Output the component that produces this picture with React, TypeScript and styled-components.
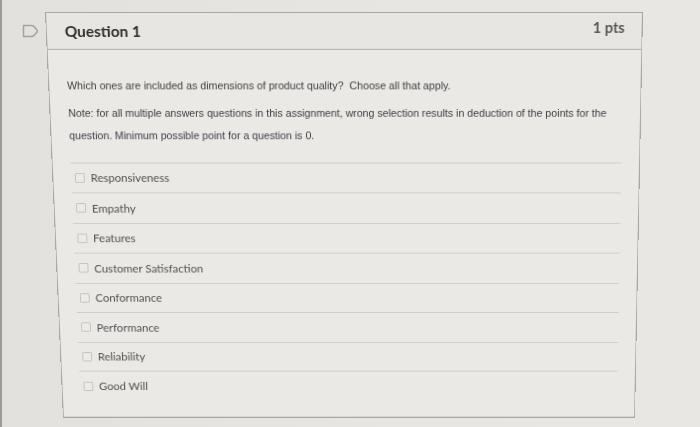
import React from "react";
import styled, { createGlobalStyle } from "styled-components";

const Global = createGlobalStyle`
  html, body {
    margin: 0;
    padding: 0;
    overflow: hidden;
    background: #e6e4e0;
  }
  * { box-sizing: border-box; }
`;

const Page = styled.div`
  width: 700px;
  height: 427px;
  display: flex;
  align-items: flex-start;
  padding: 12px 0 0 20px;
  border-left: 2px solid #9c9a96;
  background: linear-gradient(90deg, #e3e1dd 0%, #e8e6e2 60%, #e9e7e3 100%);
`;

const Gutter = styled.div`
  width: 23px;
  flex: none;
  padding-top: 12px;
`;

const Card = styled.section`
  width: 598px;
  height: 424px;
  flex: none;
  border: 1px solid #a9a8a4;
  background: #ebe9e5;
  display: flex;
  flex-direction: column;
  transform-origin: 0 0;
  transform: matrix3d(1, 0, 0, 0, 0.0443, 1, 0, 0.000107, 0, 0, 1, 0, 0, 0, 0, 1);
`;

const Header = styled.header`
  height: 37px;
  flex: none;
  display: flex;
  align-items: center;
  justify-content: space-between;
  padding: 0 17px 0 18px;
  background: #e8e6e2;
  border-bottom: 1px solid #aeada9;
`;

const Title = styled.h2`
  margin: 0;
  font-family: Lato, "Open Sans", sans-serif;
  font-weight: 700;
  font-size: 15.4px;
  color: #2f2f30;
  margin-top: -1px;
`;

const Points = styled.span`
  font-family: Lato, "Open Sans", sans-serif;
  font-weight: 700;
  font-size: 14.6px;
  color: #56575a;
  margin-top: -8px;
`;

const Body = styled.div`
  padding: 25px 18px 0 18px;
  display: flex;
  flex-direction: column;
`;

const Prompt = styled.p<{ $gap?: number }>`
  margin: ${(p) => p.$gap ?? 0}px 0 0 0;
  font-family: "Liberation Sans", Arial, sans-serif;
  font-size: 10.7px;
  line-height: 23.5px;
  color: #3c3e44;
`;

const Answers = styled.ul`
  list-style: none;
  margin: 15px 0 0 0;
  padding: 0;
  border-top: 1px solid #cfcdc9;
`;

const Answer = styled.li`
  height: 31.5px;
  display: flex;
  align-items: center;
  gap: 6px;
  padding-left: 4px;
  border-bottom: 1px solid #cfcdc9;
  &:last-child {
    border-bottom: none;
  }
`;

const Box = styled.span`
  width: 10px;
  height: 10px;
  flex: none;
  border: 1px solid #c4c3bf;
  border-radius: 1px;
  background: #edebe7;
`;

const Label = styled.span`
  font-family: Lato, "Open Sans", sans-serif;
  font-size: 11.6px;
  color: #505154;
`;

const FlagIcon = () => (
  <svg width="17" height="14" viewBox="0 0 17 14" fill="none">
    <path
      d="M1.5 1.5 H10 Q11 1.5 11.7 2.2 L15 6 Q15.6 7 15 8 L11.7 11.8 Q11 12.5 10 12.5 H1.5 Z"
      stroke="#a3a29f"
      strokeWidth="1.5"
      strokeLinejoin="round"
    />
  </svg>
);

const options = [
  "Responsiveness",
  "Empathy",
  "Features",
  "Customer Satisfaction",
  "Conformance",
  "Performance",
  "Reliability",
  "Good Will",
];

export default function App() {
  return (
    <>
      <Global />
      <Page>
        <Gutter>
          <FlagIcon />
        </Gutter>
        <Card>
          <Header>
            <Title>Question 1</Title>
            <Points>1 pts</Points>
          </Header>
          <Body>
            <Prompt>
              Which ones are included as dimensions of product quality?&nbsp; Choose all that apply.
            </Prompt>
            <Prompt $gap={4}>
              Note: for all multiple answers questions in this assignment, wrong selection results in
              deduction of the points for the question. Minimum possible point for a question is 0.
            </Prompt>
            <Answers>
              {options.map((o) => (
                <Answer key={o}>
                  <Box />
                  <Label>{o}</Label>
                </Answer>
              ))}
            </Answers>
          </Body>
        </Card>
      </Page>
    </>
  );
}
